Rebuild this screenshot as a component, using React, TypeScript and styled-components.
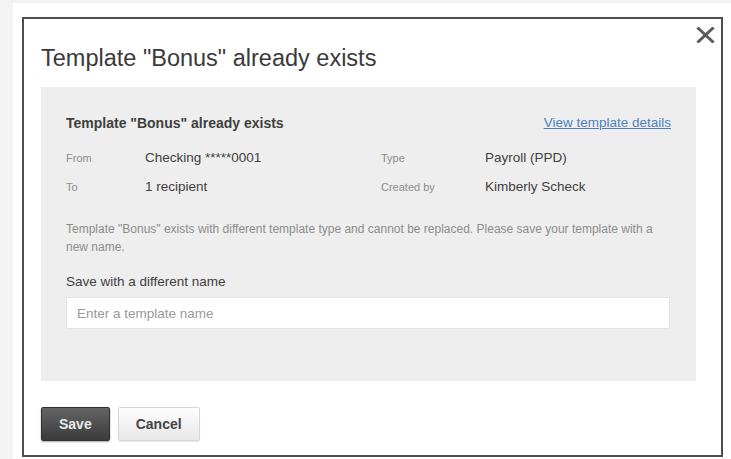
import React from "react";
import styled, { createGlobalStyle } from "styled-components";

const GlobalStyle = createGlobalStyle`
  html, body {
    margin: 0;
    padding: 0;
    background: #f3f3f3;
    font-family: "Liberation Sans", Arial, sans-serif;
  }
  * { box-sizing: border-box; }
`;

const Page = styled.div`
  margin: 3px 0 0 13px;
  padding: 14px 0 0 9px;
  background: #ffffff;
  min-height: 456px;
`;

const Dialog = styled.div`
  position: relative;
  width: 701px;
  height: 440px;
  border: 2px solid #4e4e4e;
  background: #ffffff;
  padding: 27px 25px 0 17px;
  display: flex;
  flex-direction: column;
`;

const CloseButton = styled.button`
  position: absolute;
  top: 6px;
  right: 5px;
  width: 21px;
  height: 19px;
  padding: 0;
  border: 0;
  background: transparent;
  cursor: pointer;
  display: flex;
  align-items: center;
  justify-content: center;
`;

const Title = styled.h1`
  margin: 0;
  font-size: 23.5px;
  line-height: 24px;
  font-weight: normal;
  color: #3a3a3a;
`;

const Panel = styled.section`
  margin-top: 17px;
  width: 655px;
  background: #eeeeee;
  padding: 28px 26px 52px 25px;
`;

const PanelHeader = styled.div`
  display: flex;
  justify-content: space-between;
  align-items: center;
  height: 16px;
`;

const PanelTitle = styled.h2`
  margin: 0;
  font-size: 14px;
  line-height: 16px;
  font-weight: bold;
  color: #3e3e3e;
`;

const DetailsLink = styled.a`
  font-size: 13.5px;
  line-height: 16px;
  color: #4f7fc2;
  text-decoration: underline;
  margin-right: -1px;
`;

const InfoGrid = styled.dl`
  margin: 17px 0 0;
  display: grid;
  grid-template-columns: 79px 236px 104px 1fr;
  row-gap: 9px;
  align-items: center;
`;

const InfoLabel = styled.dt`
  font-size: 11px;
  line-height: 20px;
  color: #8c8c8c;
`;

const InfoValue = styled.dd`
  margin: 0;
  font-size: 13.5px;
  line-height: 20px;
  color: #3e3e3e;
`;

const Note = styled.p`
  margin: 23px 0 0;
  font-size: 12px;
  line-height: 18px;
  color: #8c8c8c;
`;

const FieldLabel = styled.label`
  display: block;
  margin-top: 17px;
  font-size: 13.5px;
  line-height: 18px;
  color: #3e3e3e;
`;

const TextInput = styled.input`
  display: block;
  margin-top: 6px;
  width: 604px;
  height: 32px;
  border: 1px solid #e4e4e4;
  background: #ffffff;
  padding: 0 10px;
  font-family: inherit;
  font-size: 13.5px;
  color: #333;
  outline: none;
  &::placeholder {
    color: #9a9a9a;
  }
`;

const Actions = styled.div`
  margin-top: 26px;
  display: flex;
  gap: 8px;
`;

const Button = styled.button<{ $primary?: boolean }>`
  height: 34px;
  padding: 0 17px;
  border-radius: 2px;
  font-family: inherit;
  font-size: 14px;
  font-weight: bold;
  cursor: pointer;
  border: 1px solid ${(p) => (p.$primary ? "#2f2f2f" : "#d6d6d6")};
  color: ${(p) => (p.$primary ? "#e9e9e9" : "#444444")};
  background: ${(p) =>
    p.$primary
      ? "linear-gradient(#646464, #3b3b3b)"
      : "linear-gradient(#fdfdfd, #e8e8e8)"};
  box-shadow: ${(p) =>
    p.$primary ? "0 1px 2px rgba(0,0,0,0.35)" : "0 1px 1px rgba(0,0,0,0.08)"};
`;

const CloseIcon = () => (
  <svg width="19" height="16" viewBox="0 0 19 16" aria-hidden="true">
    <path d="M2.5 1.5 L16.5 14.5 M16.5 1.5 L2.5 14.5" stroke="#5a5a5a" strokeWidth="3" strokeLinecap="square" />
  </svg>
);

export default function App() {
  return (
    <>
      <GlobalStyle />
      <Page>
        <Dialog role="dialog" aria-labelledby="dlg-title">
          <CloseButton aria-label="Close">
            <CloseIcon />
          </CloseButton>
          <Title id="dlg-title">Template "Bonus" already exists</Title>
          <Panel>
            <PanelHeader>
              <PanelTitle>Template "Bonus" already exists</PanelTitle>
              <DetailsLink href="#">View template details</DetailsLink>
            </PanelHeader>
            <InfoGrid>
              <InfoLabel>From</InfoLabel>
              <InfoValue>Checking *****0001</InfoValue>
              <InfoLabel>Type</InfoLabel>
              <InfoValue>Payroll (PPD)</InfoValue>
              <InfoLabel>To</InfoLabel>
              <InfoValue>1 recipient</InfoValue>
              <InfoLabel>Created by</InfoLabel>
              <InfoValue>Kimberly Scheck</InfoValue>
            </InfoGrid>
            <Note>
              Template "Bonus" exists with different template type and cannot be replaced. Please save your template with a new name.
            </Note>
            <FieldLabel htmlFor="tpl-name">Save with a different name</FieldLabel>
            <TextInput id="tpl-name" placeholder="Enter a template name" />
          </Panel>
          <Actions>
            <Button $primary>Save</Button>
            <Button>Cancel</Button>
          </Actions>
        </Dialog>
      </Page>
    </>
  );
}
